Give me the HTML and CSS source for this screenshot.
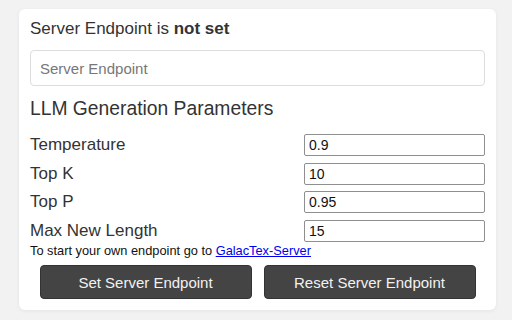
FILE: index.html
```html
<!DOCTYPE html>
<html lang="en">
<head>
  <meta charset="UTF-8">
  <title>GalacTex</title>
  <link rel="stylesheet" href="styles.css">
</head>
<body>
  <div class="card">
    <div class="status">Server Endpoint is <b>not set</b></div>
    <input type="text" class="endpoint-input" placeholder="Server Endpoint">

    <div class="section-title">LLM Generation Parameters</div>
    <div class="param-row">
      <label for="temperature">Temperature</label>
      <input type="text" id="temperature" class="param-input" value="0.9">
    </div>
    <div class="param-row">
      <label for="top-k">Top K</label>
      <input type="text" id="top-k" class="param-input" value="10">
    </div>
    <div class="param-row">
      <label for="top-p">Top P</label>
      <input type="text" id="top-p" class="param-input" value="0.95">
    </div>
    <div class="param-row">
      <label for="max-len">Max New Length</label>
      <input type="text" id="max-len" class="param-input" value="15">
    </div>

    <div class="hint">To start your own endpoint go to <a href="#">GalacTex-Server</a></div>

    <div class="buttons">
      <button class="btn">Set Server Endpoint</button>
      <button class="btn">Reset Server Endpoint</button>
    </div>
  </div>
</body>
</html>
```

FILE: styles.css
```css
* {
  box-sizing: border-box;
}

body {
  margin: 0;
  padding: 9px 16px 10px 19px;
  background: #f2f2f2;
  font-family: "Liberation Sans", Arial, sans-serif;
  color: #333;
}

.card {
  background: white;
  border-radius: 6px;
  box-shadow: 0 1px 4px rgba(0, 0, 0, 0.06);
  padding: 10px 11px 11px;
}

.status {
  font-size: 17px;
  line-height: 20px;
}

.endpoint-input {
  display: block;
  width: 100%;
  height: 36px;
  margin-top: 11px;
  padding: 0 9px;
  border: 1px solid #ddd;
  border-radius: 4px;
  font-family: inherit;
  font-size: 15px;
  color: #333;
}

.endpoint-input::placeholder {
  color: #777;
}

.section-title {
  font-size: 19.3px;
  line-height: 22px;
  margin-top: 12px;
  margin-bottom: 14px;
}

.param-row {
  display: flex;
  justify-content: space-between;
  align-items: center;
  height: 22px;
  margin-bottom: 6.5px;
  font-size: 17px;
}

.param-input {
  width: 181px;
  height: 22px;
  padding: 0 4px;
  border: 1px solid #8f8f8f;
  border-radius: 2px;
  font-family: inherit;
  font-size: 14px;
  color: #111;
}

.hint {
  font-size: 12.8px;
  line-height: 15px;
  margin-top: -5px;
  color: #111;
}

.hint a {
  color: #0000ee;
}

.buttons {
  display: flex;
  justify-content: center;
  gap: 12px;
  margin-top: 7px;
}

.btn {
  width: 212px;
  height: 34px;
  background: #444;
  color: #f2f2f2;
  border: 1px solid #333;
  border-radius: 4px;
  font-family: inherit;
  font-size: 15px;
  cursor: pointer;
}
```
